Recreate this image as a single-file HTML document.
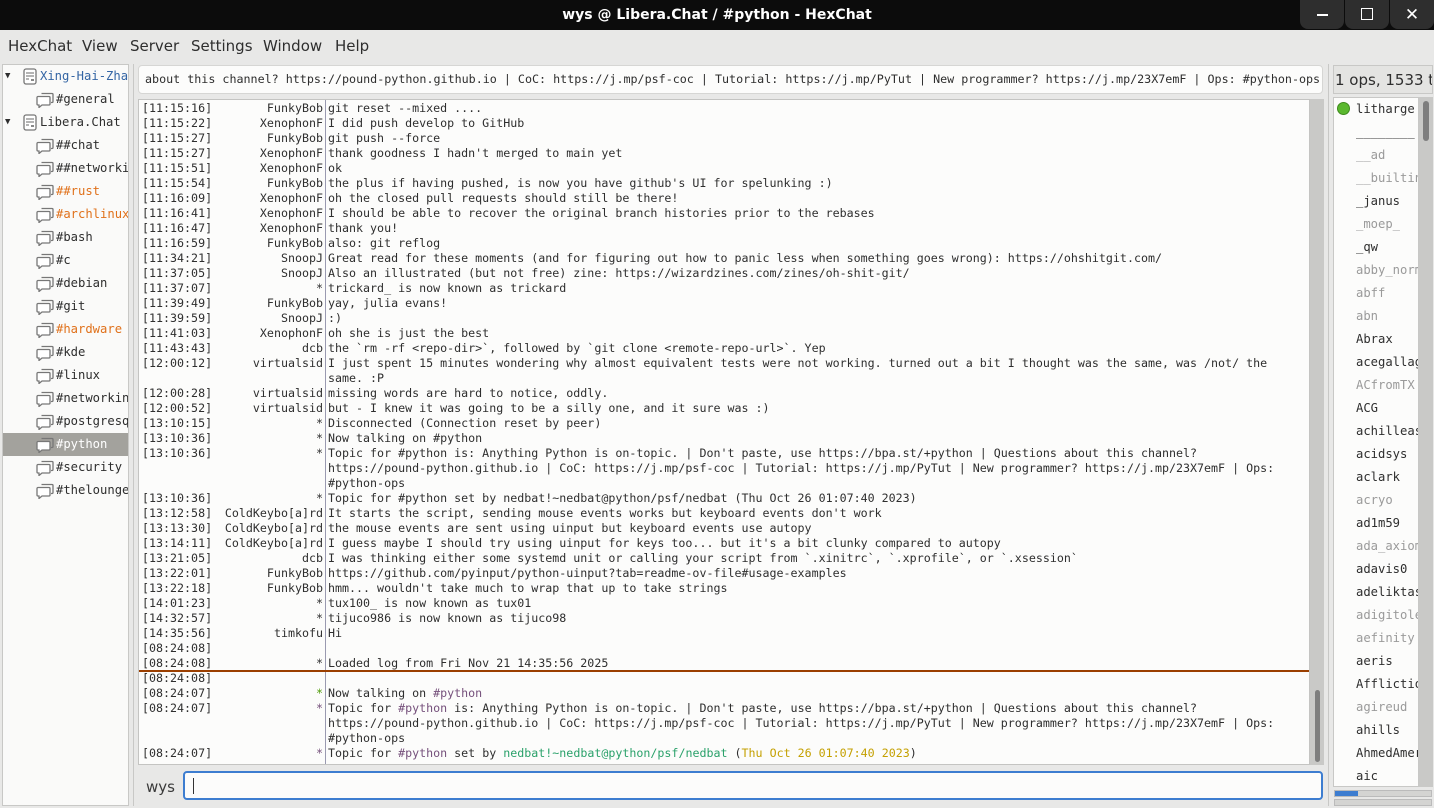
<!DOCTYPE html>
<html><head><meta charset="utf-8"><style>
*{margin:0;padding:0;box-sizing:border-box}
body{width:1434px;height:808px;overflow:hidden;background:#e8e8e7;font-family:"DejaVu Sans Mono","Liberation Mono",monospace;color:#2e2e2e;position:relative}
.title{position:absolute;left:0;top:0;width:1434px;height:30px;background:#0c0c0c;color:#fff;font:bold 14px "DejaVu Sans","Liberation Sans",sans-serif;text-align:center;line-height:30px}
.wb{position:absolute;top:0;width:44px;height:29px;background:#2e2e2e;border-radius:0 0 8px 8px}
.menu{position:absolute;top:30px;left:0;width:1434px;height:32px;font:15px "DejaVu Sans","Liberation Sans",sans-serif;line-height:32px;color:#2e2e2e}
.menu span{position:absolute}
.tree{position:absolute;left:2px;top:64px;width:127px;height:742px;background:#fafaf9;border:1px solid #c8c8c6;font-size:12.2px;overflow:hidden}
.tr{position:absolute;height:23px;line-height:23px;white-space:nowrap;width:127px}
.ic{position:absolute;top:4px}
.topic{position:absolute;left:138px;top:65px;width:1185px;height:29px;background:#fcfcfb;border:1px solid #d6d6d4;border-radius:4px;font-size:11.7px;line-height:27px;padding-left:6px;white-space:nowrap;overflow:hidden}
.chat{position:absolute;left:138px;top:99px;width:1172px;height:666px;background:#fcfcfb;border:1px solid #c4c4c2;overflow:hidden;font-size:11.65px}
.sep{position:absolute;left:186px;top:0;width:1px;height:666px;background:#9a9ab0}
.row{position:absolute;left:0;height:15px;line-height:15px;white-space:pre;width:1172px}
.ts{position:absolute;left:3px}
.nk{position:absolute;right:988px;text-align:right}
.tx{position:absolute;left:189px}
.p{color:#75507b}.g{color:#4e9a06}.gr{color:#2aa16a}.y{color:#c4a000}
.vs{position:absolute;left:1310px;top:99px;width:14px;height:666px;background:#c9c9c7}
.thumb{position:absolute;left:1315px;top:690px;width:5px;height:72px;background:#7e7e7e;border-radius:3px}
.nick{position:absolute;left:146px;top:778px;font:15px "DejaVu Sans","Liberation Sans",sans-serif;color:#3a3a3a}
.inp{position:absolute;left:183px;top:771px;width:1140px;height:29px;border:2px solid #3d7dd0;border-radius:4px;background:#fcfcfb}
.cnt{position:absolute;left:1333px;top:65px;width:100px;height:29px;background:#e4e4e2;border:1px solid #c8c8c6;font:15px "DejaVu Sans","Liberation Sans",sans-serif;line-height:28px;padding-left:1px;white-space:nowrap;overflow:hidden}
.ul{position:absolute;left:1333px;top:97px;width:86px;height:690px;background:#fcfcfb;border:1px solid #c8c8c6;font-size:12.2px;overflow:hidden}
.u{position:absolute;left:22px;height:23px;line-height:23px;white-space:nowrap}
.gy{color:#9a9a9a}
</style></head><body>
<svg width="0" height="0" style="position:absolute"><defs>
<symbol id="b" viewBox="0 0 18 16"><path d="M5.5 1.5h10.5a1 1 0 0 1 1 1v7a1 1 0 0 1-1 1h-1" fill="none" stroke="#777" stroke-width="1.3"/><path d="M2 4.5h11a1 1 0 0 1 1 1v6.5a1 1 0 0 1-1 1H6l-3 2.5v-2.5H2a1 1 0 0 1-1-1V5.5a1 1 0 0 1 1-1z" fill="#fff" stroke="#777" stroke-width="1.3"/></symbol>
<symbol id="s" viewBox="0 0 14 17"><rect x="1" y="1" width="12" height="15" rx="2" fill="#fff" stroke="#777" stroke-width="1.3"/><path d="M3 5h8M3 8h8M3 11h3" stroke="#888" stroke-width="1.2"/><rect x="8" y="11" width="3" height="2" fill="#888"/></symbol>
</defs></svg>
<div class="title">wys @ Libera.Chat / #python - HexChat</div>
<div class="wb" style="left:1300px"><div style="position:absolute;left:17px;top:14px;width:11px;height:1.5px;background:#fff"></div></div>
<div class="wb" style="left:1345px"><div style="position:absolute;left:16px;top:8px;width:12px;height:12px;border:1.5px solid #fff"></div></div>
<div class="wb" style="left:1390px;color:#fff;font:17px sans-serif;text-align:center;line-height:29px">✕</div>
<div class="menu"><span style="left:8px">HexChat</span><span style="left:82px">View</span><span style="left:130px">Server</span><span style="left:191px">Settings</span><span style="left:263px">Window</span><span style="left:335px">Help</span></div>
<div style="position:absolute;left:133px;top:64px;width:1px;height:742px;background:#c8c8c6"></div>
<div class="tree">
<div class="tr" style="top:0"><span style="position:absolute;left:2px;font-size:9px">▼</span><svg class="ic" style="left:20px;top:3px" width="14" height="17"><use href="#s"/></svg><span style="position:absolute;left:37px;color:#3465a4">Xing-Hai-Zhang</span></div>
<div class="tr" style="top:23px"><svg class="ic" style="left:33px" width="18" height="16"><use href="#b"/></svg><span style="position:absolute;left:53px">#general</span></div>
<div class="tr" style="top:46px"><span style="position:absolute;left:2px;font-size:9px">▼</span><svg class="ic" style="left:20px;top:3px" width="14" height="17"><use href="#s"/></svg><span style="position:absolute;left:37px">Libera.Chat</span></div>
<div class="tr" style="top:69px"><svg class="ic" style="left:33px" width="18" height="16"><use href="#b"/></svg><span style="position:absolute;left:53px">##chat</span></div>
<div class="tr" style="top:92px"><svg class="ic" style="left:33px" width="18" height="16"><use href="#b"/></svg><span style="position:absolute;left:53px">##networking</span></div>
<div class="tr" style="top:115px"><svg class="ic" style="left:33px" width="18" height="16"><use href="#b"/></svg><span style="position:absolute;left:53px;color:#e0711b">##rust</span></div>
<div class="tr" style="top:138px"><svg class="ic" style="left:33px" width="18" height="16"><use href="#b"/></svg><span style="position:absolute;left:53px;color:#e0711b">#archlinux</span></div>
<div class="tr" style="top:161px"><svg class="ic" style="left:33px" width="18" height="16"><use href="#b"/></svg><span style="position:absolute;left:53px">#bash</span></div>
<div class="tr" style="top:184px"><svg class="ic" style="left:33px" width="18" height="16"><use href="#b"/></svg><span style="position:absolute;left:53px">#c</span></div>
<div class="tr" style="top:207px"><svg class="ic" style="left:33px" width="18" height="16"><use href="#b"/></svg><span style="position:absolute;left:53px">#debian</span></div>
<div class="tr" style="top:230px"><svg class="ic" style="left:33px" width="18" height="16"><use href="#b"/></svg><span style="position:absolute;left:53px">#git</span></div>
<div class="tr" style="top:253px"><svg class="ic" style="left:33px" width="18" height="16"><use href="#b"/></svg><span style="position:absolute;left:53px;color:#e0711b">#hardware</span></div>
<div class="tr" style="top:276px"><svg class="ic" style="left:33px" width="18" height="16"><use href="#b"/></svg><span style="position:absolute;left:53px">#kde</span></div>
<div class="tr" style="top:299px"><svg class="ic" style="left:33px" width="18" height="16"><use href="#b"/></svg><span style="position:absolute;left:53px">#linux</span></div>
<div class="tr" style="top:322px"><svg class="ic" style="left:33px" width="18" height="16"><use href="#b"/></svg><span style="position:absolute;left:53px">#networking</span></div>
<div class="tr" style="top:345px"><svg class="ic" style="left:33px" width="18" height="16"><use href="#b"/></svg><span style="position:absolute;left:53px">#postgresql</span></div>
<div class="tr" style="top:368px;background:#a3a29d;color:#fff"><svg class="ic" style="left:33px" width="18" height="16"><use href="#b"/></svg><span style="position:absolute;left:53px">#python</span></div>
<div class="tr" style="top:391px"><svg class="ic" style="left:33px" width="18" height="16"><use href="#b"/></svg><span style="position:absolute;left:53px">#security</span></div>
<div class="tr" style="top:414px"><svg class="ic" style="left:33px" width="18" height="16"><use href="#b"/></svg><span style="position:absolute;left:53px">#thelounge</span></div>
</div>
<div class="topic">about this channel? https://pound-python.github.io | CoC: https://j.mp/psf-coc | Tutorial: https://j.mp/PyTut | New programmer? https://j.mp/23X7emF | Ops: #python-ops</div>
<div class="chat">
<div class="sep"></div>
<div class="row" style="top:1px"><span class="ts">[11:15:16]</span><span class="nk">FunkyBob</span><span class="tx">git reset --mixed ....</span></div>
<div class="row" style="top:16px"><span class="ts">[11:15:22]</span><span class="nk">XenophonF</span><span class="tx">I did push develop to GitHub</span></div>
<div class="row" style="top:31px"><span class="ts">[11:15:27]</span><span class="nk">FunkyBob</span><span class="tx">git push --force</span></div>
<div class="row" style="top:46px"><span class="ts">[11:15:27]</span><span class="nk">XenophonF</span><span class="tx">thank goodness I hadn't merged to main yet</span></div>
<div class="row" style="top:61px"><span class="ts">[11:15:51]</span><span class="nk">XenophonF</span><span class="tx">ok</span></div>
<div class="row" style="top:76px"><span class="ts">[11:15:54]</span><span class="nk">FunkyBob</span><span class="tx">the plus if having pushed, is now you have github's UI for spelunking :)</span></div>
<div class="row" style="top:91px"><span class="ts">[11:16:09]</span><span class="nk">XenophonF</span><span class="tx">oh the closed pull requests should still be there!</span></div>
<div class="row" style="top:106px"><span class="ts">[11:16:41]</span><span class="nk">XenophonF</span><span class="tx">I should be able to recover the original branch histories prior to the rebases</span></div>
<div class="row" style="top:121px"><span class="ts">[11:16:47]</span><span class="nk">XenophonF</span><span class="tx">thank you!</span></div>
<div class="row" style="top:136px"><span class="ts">[11:16:59]</span><span class="nk">FunkyBob</span><span class="tx">also: git reflog</span></div>
<div class="row" style="top:151px"><span class="ts">[11:34:21]</span><span class="nk">SnoopJ</span><span class="tx">Great read for these moments (and for figuring out how to panic less when something goes wrong): https://ohshitgit.com/</span></div>
<div class="row" style="top:166px"><span class="ts">[11:37:05]</span><span class="nk">SnoopJ</span><span class="tx">Also an illustrated (but not free) zine: https://wizardzines.com/zines/oh-shit-git/</span></div>
<div class="row" style="top:181px"><span class="ts">[11:37:07]</span><span class="nk">*</span><span class="tx">trickard_ is now known as trickard</span></div>
<div class="row" style="top:196px"><span class="ts">[11:39:49]</span><span class="nk">FunkyBob</span><span class="tx">yay, julia evans!</span></div>
<div class="row" style="top:211px"><span class="ts">[11:39:59]</span><span class="nk">SnoopJ</span><span class="tx">:)</span></div>
<div class="row" style="top:226px"><span class="ts">[11:41:03]</span><span class="nk">XenophonF</span><span class="tx">oh she is just the best</span></div>
<div class="row" style="top:241px"><span class="ts">[11:43:43]</span><span class="nk">dcb</span><span class="tx">the `rm -rf &lt;repo-dir&gt;`, followed by `git clone &lt;remote-repo-url&gt;`. Yep</span></div>
<div class="row" style="top:256px"><span class="ts">[12:00:12]</span><span class="nk">virtualsid</span><span class="tx">I just spent 15 minutes wondering why almost equivalent tests were not working. turned out a bit I thought was the same, was /not/ the</span></div>
<div class="row" style="top:271px"><span class="tx">same. :P</span></div>
<div class="row" style="top:286px"><span class="ts">[12:00:28]</span><span class="nk">virtualsid</span><span class="tx">missing words are hard to notice, oddly.</span></div>
<div class="row" style="top:301px"><span class="ts">[12:00:52]</span><span class="nk">virtualsid</span><span class="tx">but - I knew it was going to be a silly one, and it sure was :)</span></div>
<div class="row" style="top:316px"><span class="ts">[13:10:15]</span><span class="nk">*</span><span class="tx">Disconnected (Connection reset by peer)</span></div>
<div class="row" style="top:331px"><span class="ts">[13:10:36]</span><span class="nk">*</span><span class="tx">Now talking on #python</span></div>
<div class="row" style="top:346px"><span class="ts">[13:10:36]</span><span class="nk">*</span><span class="tx">Topic for #python is: Anything Python is on-topic. | Don't paste, use https://bpa.st/+python | Questions about this channel?</span></div>
<div class="row" style="top:361px"><span class="tx">https://pound-python.github.io | CoC: https://j.mp/psf-coc | Tutorial: https://j.mp/PyTut | New programmer? https://j.mp/23X7emF | Ops:</span></div>
<div class="row" style="top:376px"><span class="tx">#python-ops</span></div>
<div class="row" style="top:391px"><span class="ts">[13:10:36]</span><span class="nk">*</span><span class="tx">Topic for #python set by nedbat!~nedbat@python/psf/nedbat (Thu Oct 26 01:07:40 2023)</span></div>
<div class="row" style="top:406px"><span class="ts">[13:12:58]</span><span class="nk">ColdKeybo[a]rd</span><span class="tx">It starts the script, sending mouse events works but keyboard events don't work</span></div>
<div class="row" style="top:421px"><span class="ts">[13:13:30]</span><span class="nk">ColdKeybo[a]rd</span><span class="tx">the mouse events are sent using uinput but keyboard events use autopy</span></div>
<div class="row" style="top:436px"><span class="ts">[13:14:11]</span><span class="nk">ColdKeybo[a]rd</span><span class="tx">I guess maybe I should try using uinput for keys too... but it's a bit clunky compared to autopy</span></div>
<div class="row" style="top:451px"><span class="ts">[13:21:05]</span><span class="nk">dcb</span><span class="tx">I was thinking either some systemd unit or calling your script from `.xinitrc`, `.xprofile`, or `.xsession`</span></div>
<div class="row" style="top:466px"><span class="ts">[13:22:01]</span><span class="nk">FunkyBob</span><span class="tx">https://github.com/pyinput/python-uinput?tab=readme-ov-file#usage-examples</span></div>
<div class="row" style="top:481px"><span class="ts">[13:22:18]</span><span class="nk">FunkyBob</span><span class="tx">hmm... wouldn't take much to wrap that up to take strings</span></div>
<div class="row" style="top:496px"><span class="ts">[14:01:23]</span><span class="nk">*</span><span class="tx">tux100_ is now known as tux01</span></div>
<div class="row" style="top:511px"><span class="ts">[14:32:57]</span><span class="nk">*</span><span class="tx">tijuco986 is now known as tijuco98</span></div>
<div class="row" style="top:526px"><span class="ts">[14:35:56]</span><span class="nk">timkofu</span><span class="tx">Hi</span></div>
<div class="row" style="top:541px"><span class="ts">[08:24:08]</span></div>
<div class="row" style="top:556px"><span class="ts">[08:24:08]</span><span class="nk">*</span><span class="tx">Loaded log from Fri Nov 21 14:35:56 2025</span></div>
<div style="position:absolute;left:0;top:570px;width:1172px;height:1.5px;background:#9b3f00"></div>
<div class="row" style="top:571px"><span class="ts">[08:24:08]</span></div>
<div class="row" style="top:586px"><span class="ts">[08:24:07]</span><span class="nk g">*</span><span class="tx">Now talking on <span class="p">#python</span></span></div>
<div class="row" style="top:601px"><span class="ts">[08:24:07]</span><span class="nk p">*</span><span class="tx">Topic for <span class="p">#python</span> is: Anything Python is on-topic. | Don't paste, use https://bpa.st/+python | Questions about this channel?</span></div>
<div class="row" style="top:616px"><span class="tx">https://pound-python.github.io | CoC: https://j.mp/psf-coc | Tutorial: https://j.mp/PyTut | New programmer? https://j.mp/23X7emF | Ops:</span></div>
<div class="row" style="top:631px"><span class="tx">#python-ops</span></div>
<div class="row" style="top:646px"><span class="ts">[08:24:07]</span><span class="nk p">*</span><span class="tx">Topic for <span class="p">#python</span> set by <span class="gr">nedbat!~nedbat@python/psf/nedbat</span> (<span class="y">Thu Oct 26 01:07:40 2023</span>)</span></div>
</div>
<div class="vs"></div><div class="thumb"></div>
<div class="nick">wys</div>
<div class="inp"><div style="position:absolute;left:8px;top:5px;width:1px;height:16px;background:#333"></div></div>
<div style="position:absolute;left:1328px;top:64px;width:1px;height:742px;background:#c8c8c6"></div>
<div class="cnt">1 ops, 1533 total</div>
<div class="ul">
<div style="position:absolute;left:3px;top:4px;width:13px;height:13px;border-radius:50%;background:#5ab82e;border:1px solid #3f8a1e"></div>
<div class="u" style="top:0">litharge</div>
<div class="u" style="top:23px">________</div>
<div class="u gy" style="top:46px">__ad</div>
<div class="u gy" style="top:69px">__builtin</div>
<div class="u" style="top:92px">_janus</div>
<div class="u gy" style="top:115px">_moep_</div>
<div class="u" style="top:138px">_qw</div>
<div class="u gy" style="top:161px">abby_norm</div>
<div class="u gy" style="top:184px">abff</div>
<div class="u gy" style="top:207px">abn</div>
<div class="u" style="top:230px">Abrax</div>
<div class="u" style="top:253px">acegallag</div>
<div class="u gy" style="top:276px">ACfromTX</div>
<div class="u" style="top:299px">ACG</div>
<div class="u" style="top:322px">achilleas</div>
<div class="u" style="top:345px">acidsys</div>
<div class="u" style="top:368px">aclark</div>
<div class="u gy" style="top:391px">acryo</div>
<div class="u" style="top:414px">ad1m59</div>
<div class="u gy" style="top:437px">ada_axiom</div>
<div class="u" style="top:460px">adavis0</div>
<div class="u" style="top:483px">adeliktas</div>
<div class="u gy" style="top:506px">adigitole</div>
<div class="u gy" style="top:529px">aefinity</div>
<div class="u" style="top:552px">aeris</div>
<div class="u" style="top:575px">Afflictio</div>
<div class="u gy" style="top:598px">agireud</div>
<div class="u" style="top:621px">ahills</div>
<div class="u" style="top:644px">AhmedAmer</div>
<div class="u" style="top:667px">aic</div>
</div>
<div style="position:absolute;left:1419px;top:97px;width:14px;height:690px;background:#c9c9c7"><div style="position:absolute;left:4px;top:4px;width:6px;height:40px;background:#7e7e7e;border-radius:3px"></div></div>
<div style="position:absolute;left:1334px;top:790px;width:98px;height:7px;background:#d4d4d2;border:1px solid #bbb"><div style="width:23px;height:5px;background:#3d7dd0"></div></div>
<div style="position:absolute;left:1334px;top:799px;width:98px;height:7px;background:#d4d4d2;border:1px solid #bbb"></div>
</body></html>
